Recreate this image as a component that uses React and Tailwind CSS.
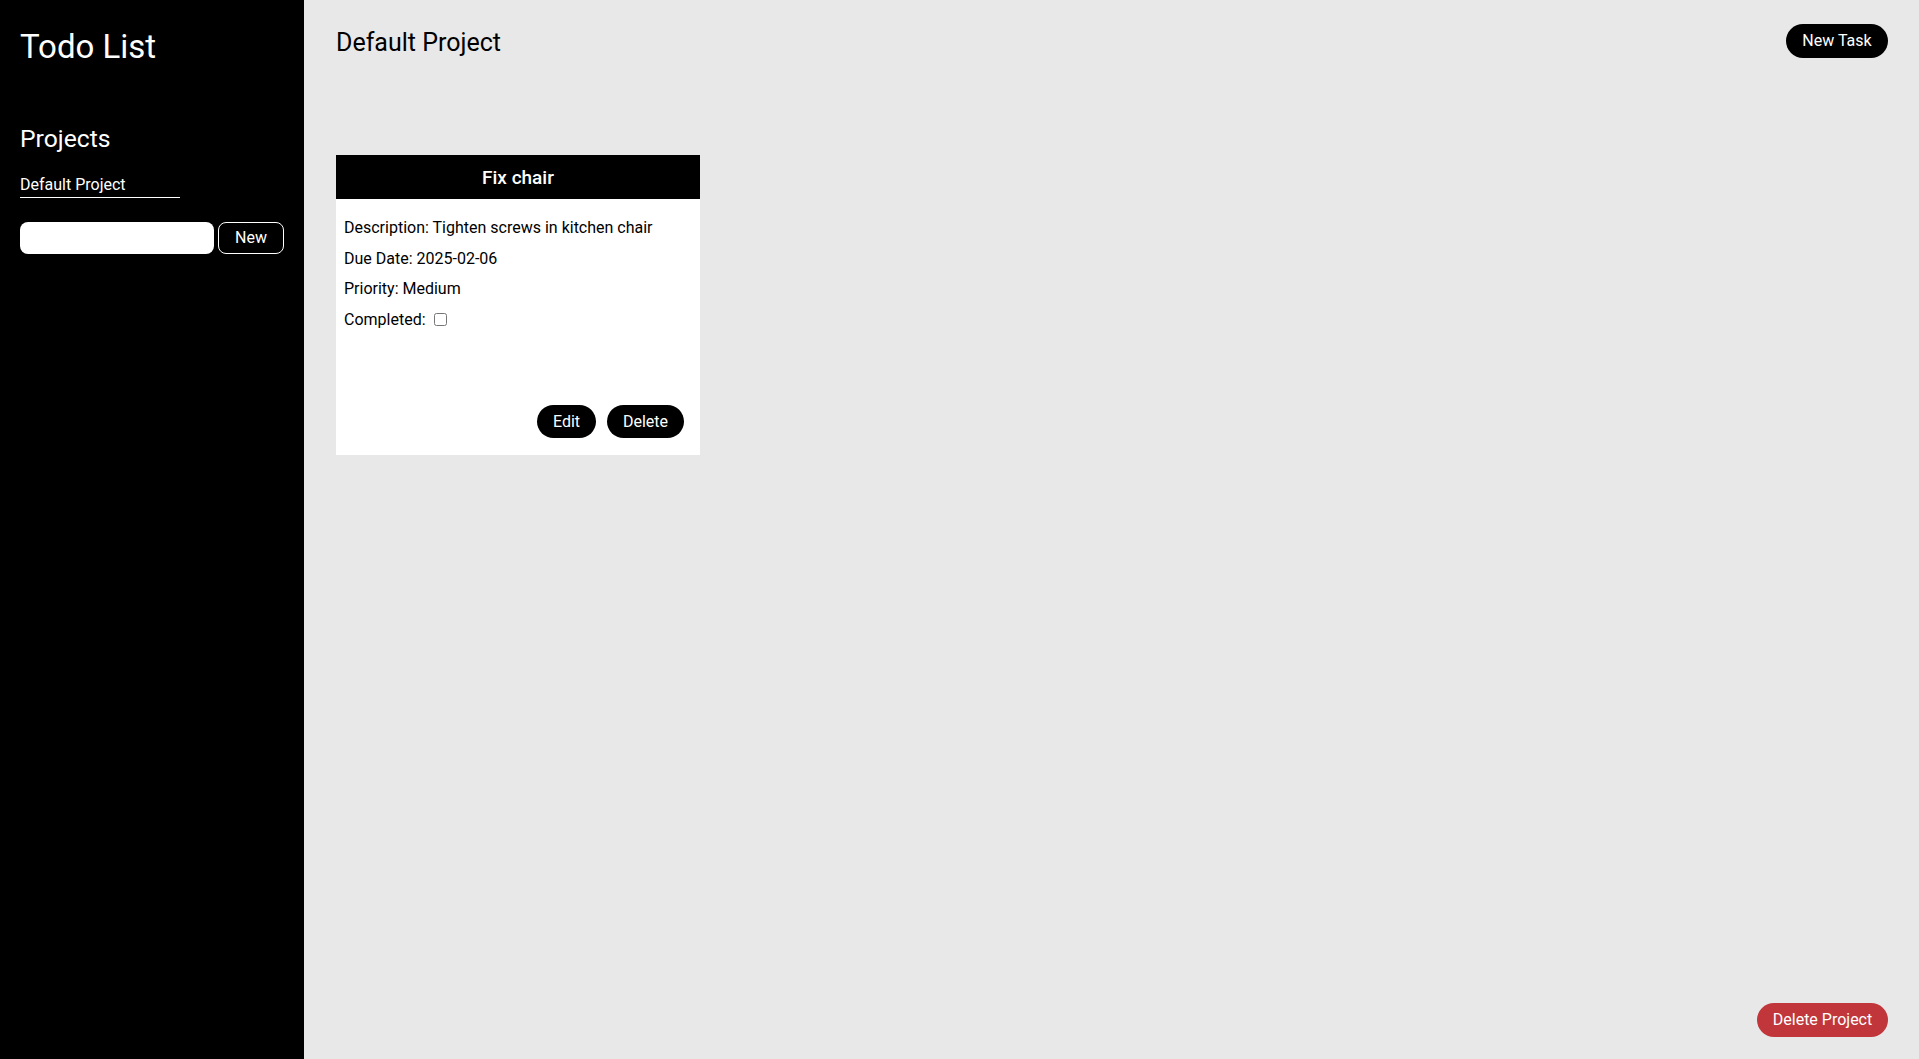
import { useState } from "react";

function Sidebar() {
  const [name, setName] = useState("");

  return (
    <aside className="w-[304px] shrink-0 bg-black px-5 text-white">
      <h1 className="mt-[28px] text-[33px] leading-[38px]">Todo List</h1>
      <h2 className="mt-[59px] text-[24.7px] leading-[28px]">Projects</h2>
      <div className="mt-[22px] w-[160px] border-b border-white pb-[3px] text-[16px] leading-[19px]">
        Default Project
      </div>
      <div className="mt-[24px] flex items-center gap-1">
        <input
          value={name}
          onChange={(e) => setName(e.target.value)}
          className="h-8 w-[194px] rounded-lg bg-white px-2 text-black outline-none"
        />
        <button className="h-8 w-[66px] rounded-lg border border-white bg-black text-[16px]">
          New
        </button>
      </div>
    </aside>
  );
}

function TaskCard() {
  return (
    <div className="flex h-[300px] w-[364px] flex-col bg-white">
      <div className="flex h-[44px] items-center justify-center bg-black pt-[2px] text-[19px] font-medium text-white">
        Fix chair
      </div>
      <div className="flex flex-col px-2 pt-[14px] text-[16px] leading-[30.5px] text-black">
        <p>Description: Tighten screws in kitchen chair</p>
        <p>Due Date: 2025-02-06</p>
        <p>Priority: Medium</p>
        <p className="flex items-center">
          Completed:
          <input type="checkbox" className="ml-[8px] h-[13px] w-[13px]" />
        </p>
      </div>
      <div className="mt-auto flex justify-end gap-[11px] pb-[17px] pr-4">
        <button className="h-[33px] w-[59px] rounded-full bg-black text-[16px] text-white">Edit</button>
        <button className="h-[33px] w-[77px] rounded-full bg-black text-[16px] text-white">Delete</button>
      </div>
    </div>
  );
}

export default function App() {
  return (
    <div className="flex h-[1059px] font-['Roboto',sans-serif]">
      <Sidebar />
      <main className="flex flex-1 flex-col bg-[#e8e8e8] pl-[32px] pr-[31px]">
        <div className="flex items-start justify-between">
          <h2 className="mt-[27px] text-[25px] leading-[32px] text-black">Default Project</h2>
          <button className="mt-[24px] h-[34px] w-[102px] rounded-full bg-black text-[16px] text-white">
            New Task
          </button>
        </div>
        <div className="mt-[96px]">
          <TaskCard />
        </div>
        <div className="mt-auto flex justify-end pb-[22px]">
          <button className="h-[34px] w-[131px] rounded-full bg-[#c0363a] text-[16px] text-white">
            Delete Project
          </button>
        </div>
      </main>
    </div>
  );
}
